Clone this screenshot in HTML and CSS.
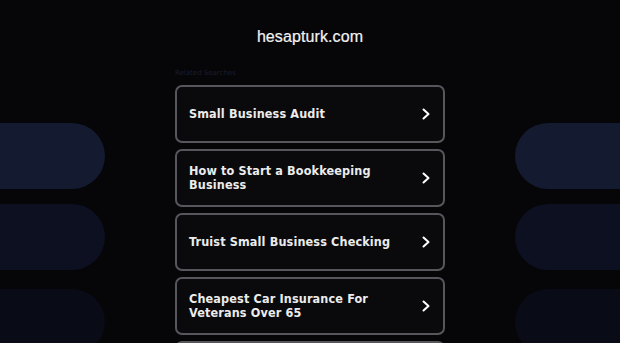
FILE: index.html
```
<!DOCTYPE html>
<html>
<head>
<meta charset="utf-8">
<link rel="stylesheet" href="styles.css">
</head>
<body>
<div class="page">
  <div class="side side-left">
    <div class="pill p1"></div>
    <div class="pill p2"></div>
    <div class="pill p3"></div>
  </div>
  <main class="center">
    <h1 class="domain">hesapturk.com</h1>
    <div class="label">Related Searches</div>
    <ul class="list">
      <li class="card"><span class="card-text">Small Business Audit</span><svg class="chev" viewBox="0 0 8 12" width="8" height="12"><path d="M1.5 1.5 L6.5 6 L1.5 10.5" fill="none" stroke="#fff" stroke-width="2" stroke-linecap="round" stroke-linejoin="round"/></svg></li>
      <li class="card"><span class="card-text">How to Start a Bookkeeping Business</span><svg class="chev" viewBox="0 0 8 12" width="8" height="12"><path d="M1.5 1.5 L6.5 6 L1.5 10.5" fill="none" stroke="#fff" stroke-width="2" stroke-linecap="round" stroke-linejoin="round"/></svg></li>
      <li class="card"><span class="card-text">Truist Small Business Checking</span><svg class="chev" viewBox="0 0 8 12" width="8" height="12"><path d="M1.5 1.5 L6.5 6 L1.5 10.5" fill="none" stroke="#fff" stroke-width="2" stroke-linecap="round" stroke-linejoin="round"/></svg></li>
      <li class="card"><span class="card-text">Cheapest Car Insurance For Veterans Over 65</span><svg class="chev" viewBox="0 0 8 12" width="8" height="12"><path d="M1.5 1.5 L6.5 6 L1.5 10.5" fill="none" stroke="#fff" stroke-width="2" stroke-linecap="round" stroke-linejoin="round"/></svg></li>
      <li class="card"><span class="card-text"></span></li>
    </ul>
  </main>
  <div class="side side-right">
    <div class="pill p1"></div>
    <div class="pill p2"></div>
    <div class="pill p3"></div>
  </div>
</div>
</body>
</html>
```
FILE: styles.css
```
html, body {
  margin: 0;
  padding: 0;
  background: #060609;
  height: 343px;
  overflow: hidden;
}
.page {
  display: grid;
  grid-template-columns: 105px 1fr 105px;
  height: 343px;
}
.side {
  display: flex;
  flex-direction: column;
  gap: 15px;
  padding-top: 123px;
}
.pill {
  height: 66px;
  flex: none;
}
.side-left .pill {
  border-radius: 0 33px 33px 0;
}
.side-right .pill {
  border-radius: 33px 0 0 33px;
}
.side .p3 {
  margin-top: 4px;
}
.p1 { background: #141a2f; }
.p2 { background: #0d1021; }
.p3 { background: #090b16; }
.center {
  display: flex;
  flex-direction: column;
  align-items: center;
}
.domain {
  margin: 28px 0 0 0;
  font-family: "Liberation Sans", Arial, sans-serif;
  font-weight: normal;
  font-size: 16px;
  line-height: 18px;
  color: #f2f2f2;
  letter-spacing: 0.1px;
  -webkit-text-stroke: 0.2px #f2f2f2;
}
.label {
  width: 270px;
  margin-top: 22px;
  font-family: "DejaVu Sans", sans-serif;
  font-size: 7px;
  line-height: 10px;
  color: #1c1c2a;
}
.list {
  list-style: none;
  margin: 7px 0 0 0;
  padding: 0;
  width: 270px;
  display: flex;
  flex-direction: column;
  gap: 6px;
}
.card {
  box-sizing: border-box;
  height: 58px;
  flex: none;
  border: 2px solid #56565c;
  border-radius: 7px;
  background: #0a0a0d;
  display: flex;
  align-items: center;
  padding: 0 12px;
  gap: 10px;
}
.card-text {
  flex: 1;
  font-family: "DejaVu Sans Condensed", "DejaVu Sans", sans-serif;
  font-stretch: condensed;
  font-weight: bold;
  font-size: 12.5px;
  line-height: 14px;
  color: #ececec;
  letter-spacing: 0.15px;
}
.chev {
  flex: none;
  margin-right: 1px;
}
```
